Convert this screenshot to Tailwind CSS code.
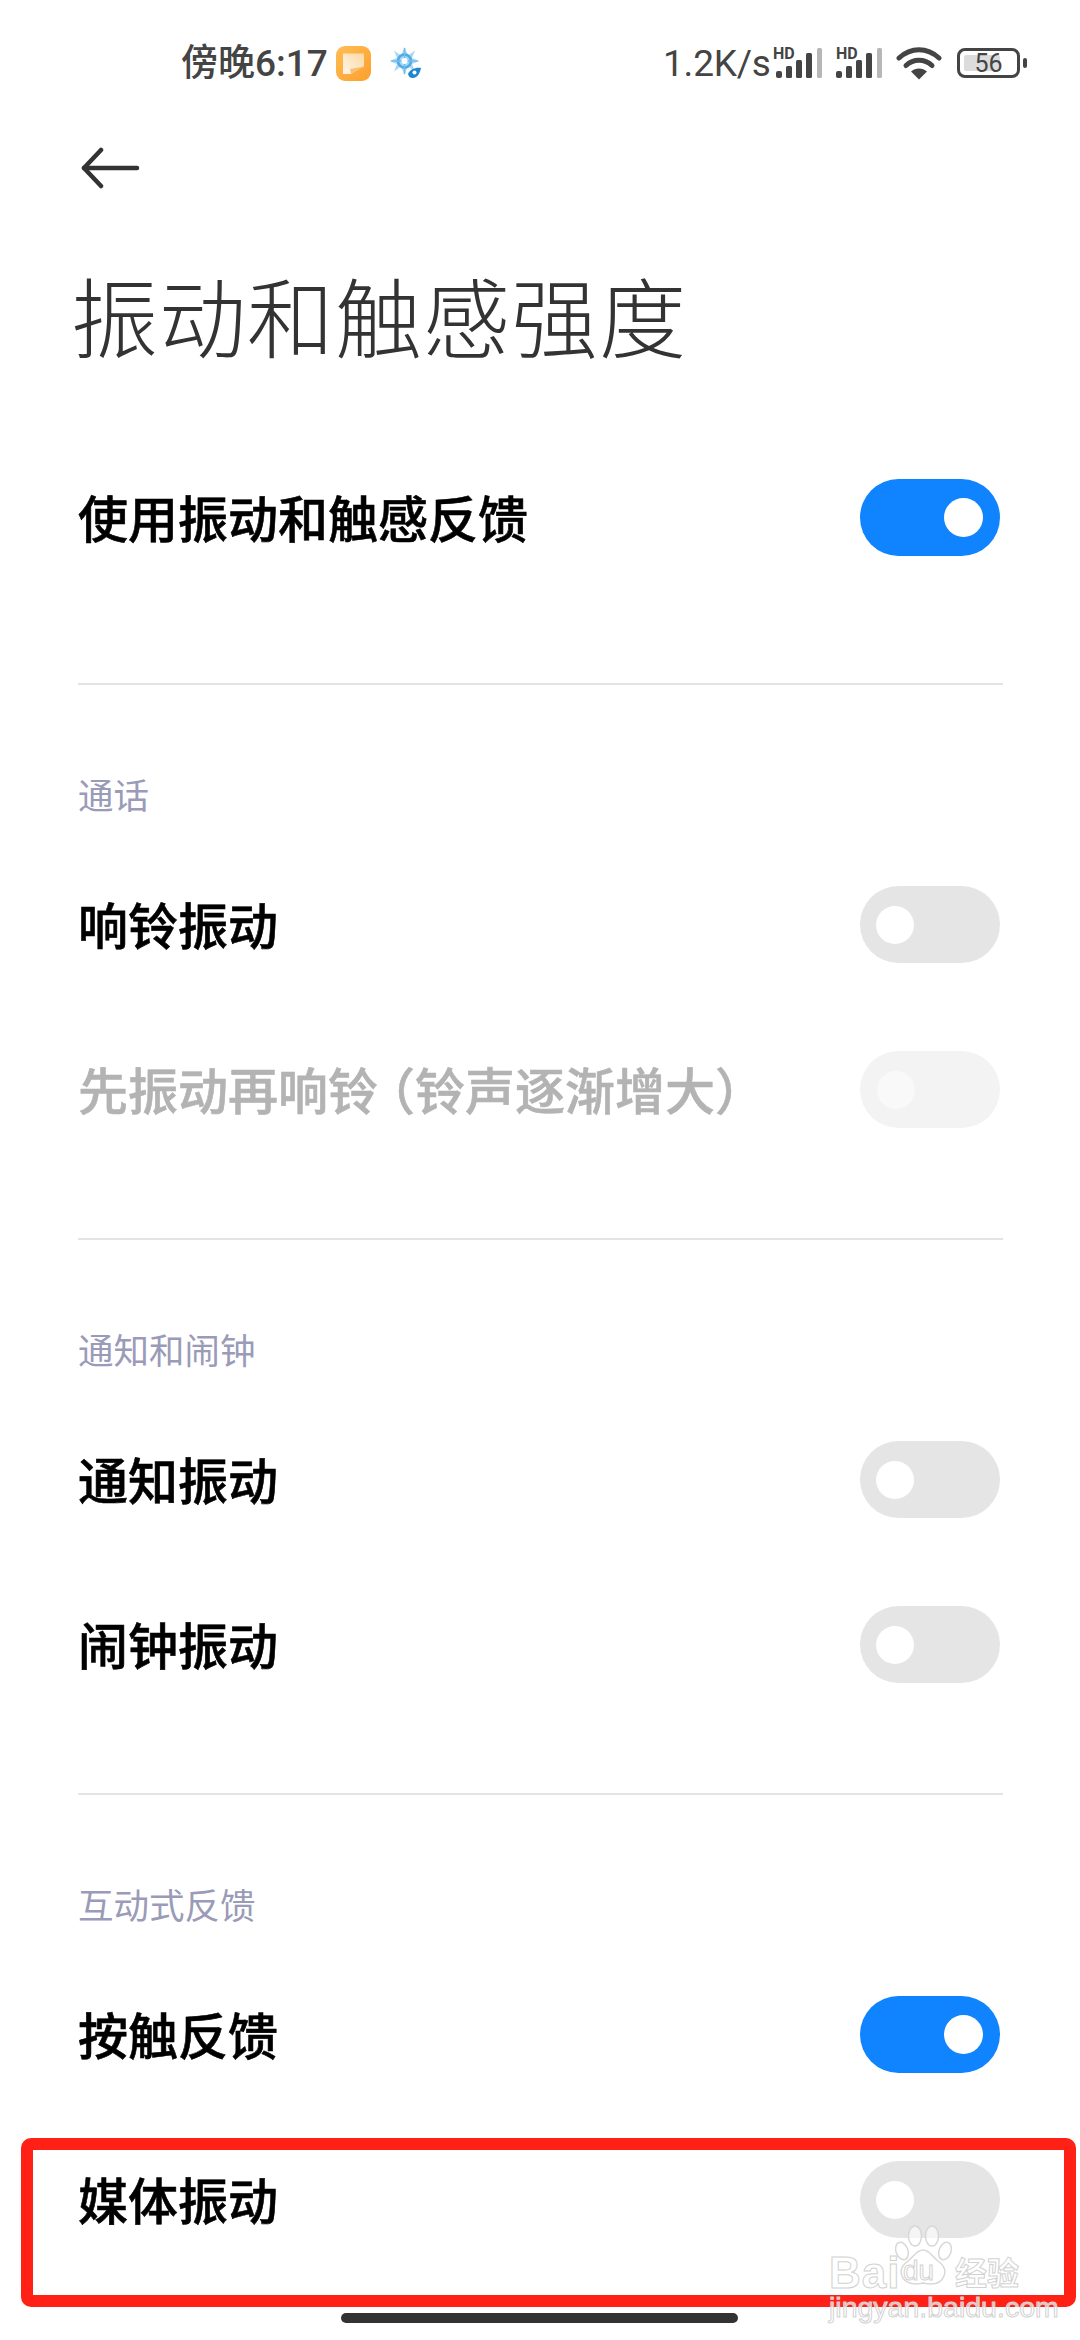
<!doctype html>
<html lang="zh-CN">
<head>
<meta charset="utf-8">
<script src="https://cdn.jsdelivr.net/npm/@tailwindcss/browser@4"></script>
</head>
<body class="bg-white">
<div class="relative w-[1080px] h-[2340px] overflow-hidden bg-white font-['Noto_Sans_CJK_SC',sans-serif] text-black">

  <!-- status bar -->
  <div class="h-[126px] flex items-center text-[#444444]">
    <span class="ml-[181px] text-[37px] leading-none font-medium font-['Roboto','Noto_Sans_CJK_SC',sans-serif] w-[153px] whitespace-nowrap">傍晚6:17</span>
    <svg class="ml-[2px]" width="35" height="35" viewBox="0 0 35 35">
      <defs><linearGradient id="og" x1="0" y1="0" x2="1" y2="1"><stop offset="0" stop-color="#ffbe55"/><stop offset="1" stop-color="#fc9f2c"/></linearGradient>
      <linearGradient id="og2" x1="0" y1="1" x2="1" y2="0"><stop offset="0" stop-color="#fff6e6"/><stop offset="1" stop-color="#fbd9a6"/></linearGradient></defs>
      <rect width="35" height="35" rx="9" fill="url(#og)"/>
      <path d="M7 7.500h21v13L15 28H7z" fill="url(#og2)"/>
      <path d="M28 20.500L15 28l-1-5z" fill="#f59a2c" opacity=".55"/>
    </svg>
    <svg class="ml-[19px]" width="32" height="32" viewBox="0 0 32 32">
      <path d="M14.500 0l3.500 8.500L25 3.500l-3 7.500 7.500 3-7.500 3 3 7.500-7-5-3.500 8.500-3.500-8.500-7 5 3-7.500-7.500-3 7.500-3-3-7.500 7 5z" fill="#a9d8f5"/>
      <circle cx="14.500" cy="14" r="6.500" fill="none" stroke="#4ea9e6" stroke-width="2.500"/>
      <path d="M14.500 1v26M1.500 14h26" stroke="#6fbdee" stroke-width="1.500"/>
      <circle cx="14.500" cy="14" r="3" fill="#fff"/>
      <path d="M18 27c2-5 8-7 13-6-1 5-3 9-7.500 10-3 .5-5-1.500-5.500-4z" fill="#1f86d0"/>
      <circle cx="24.500" cy="25.500" r="2" fill="#fff"/>
    </svg>
    <span class="ml-[241px] text-[37px] leading-none tracking-[-0.2px] font-['Roboto',sans-serif] w-[110px] whitespace-nowrap">1.2K/s</span>
    <div class="ml-[3px] relative w-[46px] h-[32px]">
      <span class="absolute left-[-3px] top-[-1px] text-[16px] leading-none font-bold font-['Roboto',sans-serif]">HD</span>
      <svg class="absolute left-0 top-0" width="46" height="32" viewBox="0 0 46 32">
        <rect x="0" y="24" width="6" height="7" rx="2" fill="#444"/><rect x="10" y="19" width="6" height="12" rx="1.500" fill="#444"/><rect x="20" y="13" width="6" height="18" rx="1.500" fill="#444"/><rect x="30" y="6" width="6" height="25" rx="1.500" fill="#444"/><rect x="41" y="1" width="5" height="30" rx="1.500" fill="#b7b7b7"/>
      </svg>
    </div>
    <div class="ml-[14px] relative w-[47px] h-[32px]">
      <span class="absolute left-0 top-[-1px] text-[16px] leading-none font-bold font-['Roboto',sans-serif]">HD</span>
      <svg class="absolute left-0 top-0" width="47" height="32" viewBox="0 0 47 32">
        <rect x="0" y="24" width="6" height="7" rx="2" fill="#444"/><rect x="10" y="19" width="6" height="12" rx="1.500" fill="#444"/><rect x="20" y="13" width="6" height="18" rx="1.500" fill="#444"/><rect x="30" y="6" width="6" height="25" rx="1.500" fill="#444"/><rect x="41" y="1" width="5" height="30" rx="1.500" fill="#b7b7b7"/>
      </svg>
    </div>
    <svg class="ml-[13px]" width="46" height="33" viewBox="0 0 46 33" fill="none" stroke="#444" stroke-width="5" stroke-linecap="round">
      <path d="M3 11C15 0 31 0 43 11"/>
      <path d="M10 18.500C17.500 11.500 28.500 11.500 36 18.500"/>
      <path d="M23 32.500l-8-8c4.500-4 11.500-4 16 0z" fill="#444" stroke="none"/>
    </svg>
    <div class="ml-[15px] relative w-[63px] h-[30px] rounded-[8px] border-[3px] border-[#444444] flex items-center justify-center">
      <div class="absolute left-[4px] top-[4px] bottom-[4px] w-[36px] rounded-[2px] bg-[#dcdcdc]"></div>
      <span class="relative text-[25px] leading-none font-['Roboto',sans-serif] text-[#444444]">56</span>
    </div>
    <div class="ml-[3px] w-[4px] h-[10px] rounded-full bg-[#444444]"></div>
  </div>

  <!-- back -->
  <div class="h-[84px] flex items-center pl-[80px]">
    <svg width="60" height="42" viewBox="0 0 60 42" fill="none" stroke="#333333" stroke-width="4.500" stroke-linecap="round" stroke-linejoin="round">
      <path d="M57 21H4"/><path d="M21 3L4 21l17 18"/>
    </svg>
  </div>

  <!-- title -->
  <div class="h-[209px] flex items-center pl-[71px] text-[#333333] text-[87px] leading-none font-light tracking-[1px]">振动和触感强度</div>

  <!-- master -->
  <div class="mt-[15px] h-[166px] flex items-center justify-between pl-[78px] pr-[80px]">
    <span class="mb-[3px] text-[50px] leading-none font-medium [-webkit-text-stroke:0.6px_currentColor]">使用振动和触感反馈</span>
    <div class="w-[140px] h-[77px] rounded-full bg-[#0f84fe] flex items-center justify-end pr-[17px]"><div class="w-[39px] h-[39px] rounded-full bg-white"></div></div>
  </div>

  <div class="mt-[83px]">
    <!-- section 1 -->
    <div class="h-[555px] border-t-2 border-[#e4e4e4] ml-[78px] w-[925px]">
      <div class="pt-[76px] h-[142px] flex items-center text-[#9a9bb8] text-[35.500px] leading-none">通话</div>
      <div class="mt-[15px] h-[165px] flex items-center justify-between mr-[3px]">
        <span class="mb-[3px] text-[50px] leading-none font-medium [-webkit-text-stroke:0.6px_currentColor]">响铃振动</span>
        <div class="w-[140px] h-[77px] rounded-full bg-[#e5e5e5] flex items-center pl-[16px]"><div class="w-[38px] h-[38px] rounded-full bg-white"></div></div>
      </div>
      <div class="h-[165px] flex items-center justify-between mr-[3px]">
        <span class="mb-[3px] text-[50px] leading-none font-medium [-webkit-text-stroke:0.6px_currentColor] text-[#b3b3b3] whitespace-nowrap">先振动再响铃<span class="ml-[12px] [font-feature-settings:'halt']">（</span>铃声逐渐增大<span class="[font-feature-settings:'halt']">）</span></span>
        <div class="w-[140px] h-[77px] rounded-full bg-[#f3f3f3] flex items-center pl-[17px]"><div class="w-[38px] h-[38px] rounded-full bg-[#f9f9f9]"></div></div>
      </div>
    </div>
    <!-- section 2 -->
    <div class="h-[555px] border-t-2 border-[#e4e4e4] ml-[78px] w-[925px]">
      <div class="pt-[76px] h-[142px] flex items-center text-[#9a9bb8] text-[35.500px] leading-none">通知和闹钟</div>
      <div class="mt-[15px] h-[165px] flex items-center justify-between mr-[3px]">
        <span class="mb-[3px] text-[50px] leading-none font-medium [-webkit-text-stroke:0.6px_currentColor]">通知振动</span>
        <div class="w-[140px] h-[77px] rounded-full bg-[#e5e5e5] flex items-center pl-[16px]"><div class="w-[38px] h-[38px] rounded-full bg-white"></div></div>
      </div>
      <div class="h-[165px] flex items-center justify-between mr-[3px]">
        <span class="mb-[3px] text-[50px] leading-none font-medium [-webkit-text-stroke:0.6px_currentColor]">闹钟振动</span>
        <div class="w-[140px] h-[77px] rounded-full bg-[#e5e5e5] flex items-center pl-[16px]"><div class="w-[38px] h-[38px] rounded-full bg-white"></div></div>
      </div>
    </div>
    <!-- section 3 -->
    <div class="border-t-2 border-[#e4e4e4] ml-[78px] w-[925px]">
      <div class="pt-[76px] h-[142px] flex items-center text-[#9a9bb8] text-[35.500px] leading-none">互动式反馈</div>
      <div class="mt-[15px] h-[165px] flex items-center justify-between mr-[3px]">
        <span class="mb-[3px] text-[50px] leading-none font-medium [-webkit-text-stroke:0.6px_currentColor]">按触反馈</span>
        <div class="w-[140px] h-[77px] rounded-full bg-[#0f84fe] flex items-center justify-end pr-[17px]"><div class="w-[39px] h-[39px] rounded-full bg-white"></div></div>
      </div>
      <div class="h-[165px] flex items-center justify-between mr-[3px]">
        <span class="mb-[3px] text-[50px] leading-none font-medium [-webkit-text-stroke:0.6px_currentColor]">媒体振动</span>
        <div class="w-[140px] h-[77px] rounded-full bg-[#e5e5e5] flex items-center pl-[16px]"><div class="w-[38px] h-[38px] rounded-full bg-white"></div></div>
      </div>
    </div>
  </div>

  <!-- annotation rectangle -->
  <div class="absolute left-[21px] top-[2138px] w-[1055px] h-[169px] rounded-[10px] border-[12px] border-[#ff2116]"></div>

  <!-- home indicator -->
  <div class="absolute left-[341px] top-[2313px] w-[397px] h-[10px] rounded-full bg-[#333333]"></div>

  <!-- watermark -->
  <div class="absolute left-[829px] top-[2225px] w-[195px] h-[95px]">
    <span class="absolute left-0 top-[28px] text-[44px] leading-[40px] font-bold font-['Liberation_Sans',sans-serif] text-white/70 [-webkit-text-stroke:1px_#d2d2d2] tracking-[1px]">Bai</span>
    <svg class="absolute left-[64px] top-0" width="64" height="62" viewBox="0 0 64 62" fill="#ffffff" fill-opacity=".6" stroke="#d8d8d8" stroke-width="1.500">
      <ellipse cx="9" cy="26" rx="6" ry="9" transform="rotate(-20 9 26)"/>
      <ellipse cx="22" cy="11" rx="6.500" ry="10"/>
      <ellipse cx="39" cy="11" rx="6.500" ry="10"/>
      <ellipse cx="52" cy="26" rx="6" ry="9" transform="rotate(20 52 26)"/>
      <path d="M30 25c7 0 9 7 15 11 7 5 8 10 6 15-3 8-12 9-21 7-8 2-18 1-21-7-2-5-1-10 6-15 6-4 8-11 15-11z"/>
    </svg>
    <span class="absolute left-[74px] top-[33px] text-[28px] leading-[26px] font-['Liberation_Sans',sans-serif] text-white/60 [-webkit-text-stroke:1px_#d2d2d2]">du</span>
    <span class="absolute left-[126px] top-[28px] text-[32px] leading-[36px] font-bold text-white/70 [-webkit-text-stroke:1px_#d2d2d2] whitespace-nowrap">经验</span>
    <span class="absolute left-0 top-[69px] text-[28.500px] leading-[26px] font-['Liberation_Sans',sans-serif] text-white/70 [-webkit-text-stroke:1px_#d2d2d2] whitespace-nowrap">jingyan.baidu.com</span>
  </div>
</div>
</body>
</html>
